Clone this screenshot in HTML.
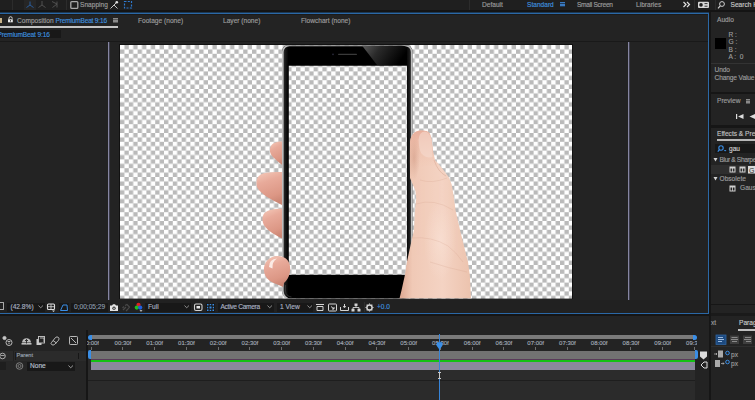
<!DOCTYPE html>
<html><head><meta charset="utf-8">
<style>
*{margin:0;padding:0;box-sizing:border-box}
html,body{width:755px;height:400px;overflow:hidden;background:#232323}
body{position:relative;-webkit-text-stroke:0.15px;font-family:"Liberation Sans",sans-serif;font-size:6.6px;color:#9c9c9c;letter-spacing:0}
.a{position:absolute}
.t{position:absolute;white-space:nowrap;line-height:1}
.b{color:#3f8fdf}
.r{font-size:6px;color:#a0a8b4;transform:translateX(-50%)}
.fld{position:absolute;background:#181818}
svg{position:absolute;overflow:visible}
</style></head><body>
<!-- ========== top bar ========== -->
<div class="a" style="left:0;top:0;width:755px;height:10px;background:#1f1f1f"></div>
<div class="a" style="left:0;top:10px;width:755px;height:2px;background:#141414"></div>
<div class="a" style="left:12px;top:0;width:1px;height:10px;background:#2c2c2c"></div>
<div class="a" style="left:24px;top:0;width:12px;height:10px;background:#262626"></div>
<svg style="left:0;top:0" width="140" height="10">
 <g fill="none" stroke="#2a62a8" stroke-width="0.9"><path d="M30 1.5V5L26.5 7.5M30 5L33.5 7.5"/></g>
 <g fill="none" stroke="#555" stroke-width="0.9"><path d="M42 1V5L38.5 7.5M42 5L45.5 7.5"/><path d="M52 1.5L57 4L52.5 7.5M57 1.5V7.5"/></g>
 <rect x="70.8" y="1.6" width="7" height="6.8" rx="1" fill="none" stroke="#a8a8a8" stroke-width="1.3"/>
 <g fill="none" stroke="#c8c8c8" stroke-width="1"><path d="M110.5 8.5L114 5L117.5 8.5M114 5L116.5 2.5"/></g><circle cx="116.8" cy="2.2" r="1.3" fill="#e0e0e0"/>
 <g fill="none" stroke="#2f7ad0" stroke-width="1.2" stroke-dasharray="2 1.3"><rect x="124.5" y="1.5" width="7" height="6.5"/></g>
</svg>
<div class="a" style="left:66px;top:0;width:1px;height:10px;background:#2c2c2c"></div>
<div class="t" style="left:80px;top:1.5px">Snapping</div>

<div class="a" style="left:469px;top:0;width:1px;height:10px;background:#2c2c2c"></div>
<div class="t" style="left:482px;top:1.5px">Default</div>
<div class="t b" style="left:527px;top:1.5px">Standard</div>
<div class="a" style="left:560px;top:2px;width:4.5px;height:5px;background:repeating-linear-gradient(#3a7ac0 0 1px,#1f3a5a 1px 1.7px)"></div>
<div class="t" style="left:577px;top:1.5px;letter-spacing:-0.3px">Small Screen</div>
<div class="t" style="left:636px;top:1.5px">Libraries</div>
<svg style="left:682px;top:1px" width="10" height="8"><path d="M1.5 1L4 3.5L1.5 6M5 1L7.5 3.5L5 6" fill="none" stroke="#e0e0e0" stroke-width="1.2"/></svg>
<div class="a" style="left:694px;top:0;width:1px;height:10px;background:#2c2c2c"></div>
<svg style="left:697px;top:0" width="13" height="10"><rect x="1" y="1.8" width="11" height="6.2" rx="1" fill="#d8d8d8"/><circle cx="4" cy="4.9" r="1.8" fill="#1f1f1f"/><path d="M7.5 3.6H10.5M7.5 6.2H10.5" stroke="#1f1f1f" stroke-width="0.9"/></svg>
<div class="a" style="left:715px;top:0;width:1px;height:10px;background:#2c2c2c"></div>
<svg style="left:717px;top:0" width="10" height="10"><circle cx="5" cy="4" r="2.4" fill="none" stroke="#cfcfcf" stroke-width="1"/><path d="M3.3 5.8L1 8.4" stroke="#cfcfcf" stroke-width="1.2"/></svg>
<div class="t" style="left:730.5px;top:1.5px;color:#c8c8c8">Search Help</div>

<!-- ========== viewer panel ========== -->
<div class="a" style="left:0;top:12px;width:709px;height:1px;background:#1c3854"></div><div class="a" style="left:0;top:13px;width:709px;height:1px;background:#2b68a6"></div>
<div class="a" style="left:708px;top:13px;width:1px;height:301px;background:#2b68a6"></div>
<div class="a" style="left:0;top:313px;width:709px;height:1px;background:#2b68a6"></div>
<div class="a" style="left:0;top:14px;width:708px;height:1px;background:#1a1a1a"></div>

<!-- tabs -->
<div class="a" style="left:0;top:18px;width:2px;height:5px;background:#c9b48a"></div>
<svg style="left:7px;top:16px" width="7" height="8"><path d="M2 3.3V2.3A1.6 1.6 0 0 1 5.2 2.3V2.8" fill="none" stroke="#e8e8e8" stroke-width="0.9"/><rect x="1" y="3.3" width="4.8" height="3" fill="#e8e8e8"/><rect x="3" y="4.1" width="0.9" height="1.4" fill="#232323"/></svg>
<div class="t" style="left:17px;top:18px">Composition <span class="b" style="letter-spacing:-0.2px">PremiumBeat 9:16</span></div>
<div class="a" style="left:113px;top:18px;width:4.5px;height:5px;background:repeating-linear-gradient(#8a8a8a 0 1px,#5a5a5a 1px 1.6px)"></div>
<div class="a" style="left:0;top:26px;width:118px;height:2px;background:#c4c4c4"></div>
<div class="t" style="left:138px;top:18px">Footage (none)</div>
<div class="t" style="left:223px;top:18px">Layer (none)</div>
<div class="t" style="left:301px;top:18px">Flowchart (none)</div>

<!-- comp name row -->
<div class="fld" style="left:0;top:30px;width:61px;height:8px"></div>
<div class="t b" style="left:-2.5px;top:31.5px;letter-spacing:-0.15px">PremiumBeat 9:16</div>
<div class="a" style="left:0;top:41px;width:708px;height:1px;background:#191919"></div>

<!-- viewer vertical lines -->
<div class="a" style="left:108px;top:42px;width:1px;height:258px;background:#8686a2"></div><div class="a" style="left:109px;top:42px;width:1px;height:258px;background:#3c3c4c"></div>
<div class="a" style="left:628px;top:42px;width:1px;height:258px;background:#8686a2"></div><div class="a" style="left:629px;top:42px;width:1px;height:258px;background:#3c3c4c"></div>

<!-- canvas -->
<div class="a" style="left:119px;top:44px;width:454px;height:255px;background:#111"></div>
<svg style="left:120px;top:45px" width="452" height="254"><defs><pattern id="ck" width="8.8" height="8.8" patternUnits="userSpaceOnUse"><rect width="8.8" height="8.8" fill="#fff"/><rect x="4.4" width="4.4" height="4.4" fill="#bababa"/><rect y="4.4" width="4.4" height="4.4" fill="#bababa"/></pattern></defs><rect width="452" height="253.6" fill="url(#ck)"/></svg>

<!-- phone + hand -->
<svg style="left:0;top:0" width="755" height="400">
 <defs>
  <clipPath id="cv"><rect x="120" y="45.6" width="452" height="253"/></clipPath>
  <linearGradient id="refl" x1="0" y1="0" x2="1" y2="0.3">
   <stop offset="0" stop-color="#5c5c5c"/><stop offset="0.4" stop-color="#2a2a2a"/><stop offset="1" stop-color="#000"/>
  </linearGradient>
  <linearGradient id="rim" gradientUnits="userSpaceOnUse" x1="282" y1="0" x2="412.5" y2="0">
   <stop offset="0" stop-color="#3a3a3a"/><stop offset="0.03" stop-color="#141414"/><stop offset="0.05" stop-color="#000"/><stop offset="0.95" stop-color="#000"/><stop offset="0.975" stop-color="#1a1a1a"/><stop offset="1" stop-color="#3a3a3a"/>
  </linearGradient>
  <linearGradient id="skinR" x1="0" y1="0" x2="1" y2="0">
   <stop offset="0" stop-color="#dba690"/><stop offset="0.18" stop-color="#f0c9b6"/><stop offset="0.6" stop-color="#f4d3c3"/><stop offset="1" stop-color="#ecc3ae"/>
  </linearGradient>
  <linearGradient id="tipR" x1="0" y1="0" x2="0" y2="1">
   <stop offset="0" stop-color="#e8ab98" stop-opacity="0.9"/><stop offset="1" stop-color="#f0c3ae" stop-opacity="0"/>
  </linearGradient>
  <linearGradient id="fing" x1="0.2" y1="0" x2="0.5" y2="1">
   <stop offset="0" stop-color="#f3c6b6"/><stop offset="0.3" stop-color="#e8aa9a"/><stop offset="0.75" stop-color="#dc9785"/><stop offset="1" stop-color="#c98472"/>
  </linearGradient>
 </defs>
 <g clip-path="url(#cv)">
  <!-- left fingers (behind phone) -->
  <path d="M284 141.5C278 141 272 142.5 270.5 147C269 151 270.5 155 274 158C277 161 281 164 284 166.5Z" fill="url(#fing)"/>
  <path d="M284 172C272 172 264 172 260 175C256 178 256 183 257 187C260 194 272 200 284 206Z" fill="url(#fing)"/>
  <path d="M284 208.8C276 208.5 268 209.5 264.5 213C261.5 216.5 262 222 264.5 226C268 231 276 235.5 284 239.5Z" fill="url(#fing)"/>
  <!-- phone body -->
  <path fill-rule="evenodd" d="M289 44.5H405.5A7 7 0 0 1 412.5 51.5V291A9 9 0 0 1 403.5 300H291A9 9 0 0 1 282 291V51.5A7 7 0 0 1 289 44.5ZM288.8 65.8V274.8H407V65.8Z" fill="url(#rim)"/>
  <path d="M289.5 45.3H405A6.7 6.7 0 0 1 411.7 52V291A8.3 8.3 0 0 1 403.4 299.3H291.1A8.3 8.3 0 0 1 282.8 291V52A6.7 6.7 0 0 1 289.5 45.3Z" fill="none" stroke="#bcbcbc" stroke-width="1.7"/>
  <path d="M285.5 285V291A6 6 0 0 0 291.5 297" fill="none" stroke="#3a3a3a" stroke-width="0.8"/>
  
  <path d="M362 45.5L377 65H407V51.5Q407 45.5 402 45.5Z" fill="url(#refl)"/>
  <circle cx="333" cy="54.3" r="0.9" fill="#2a2a3a"/>
  <rect x="338" y="53.7" width="19" height="1.2" rx="0.6" fill="#3a3a3a"/>
  <!-- pinky -->
  <path d="M283 287C278 284 269 283 265.5 276C262 269 264.5 260 272 257C280 254 289 257.5 290 266C291 274 287.5 280 284 283Z" fill="url(#fing)"/>
  <path d="M269 267Q269 259 277 258.5Q272 261.5 272.5 268.5Z" fill="#fbeae4"/>
  <!-- right thumb / hand -->
  <path d="M410 142C410.5 136 414 130.5 421 130.5C426 130.5 429 131.5 430 134L431.5 139L433 151L435 160L439.4 165L443.8 170.5L449 177.5L451.7 184.5L453.5 195L455.5 210L460 230L465 250L468 262L469.8 275L471 298.5H399.5L401.6 290L404.9 275L406.9 262L409.5 250L414 230L415 210L416.2 199L415.5 191L413 185L410 178Z" fill="url(#skinR)"/>
  <path d="M410 142C410.5 136 414 130.5 421 130.5C426 130.5 429 131.5 430 134L431.5 139L433 151L435 160L439.4 165L410 168Z" fill="url(#tipR)"/>
  <defs><radialGradient id="knk" cx="0.5" cy="0.5" r="0.5"><stop offset="0" stop-color="#c98f78" stop-opacity="0.45"/><stop offset="1" stop-color="#c98f78" stop-opacity="0"/></radialGradient>
  <radialGradient id="hil" cx="0.5" cy="0.5" r="0.5"><stop offset="0" stop-color="#fae3d8" stop-opacity="0.6"/><stop offset="1" stop-color="#fae3d8" stop-opacity="0"/></radialGradient></defs>
  <ellipse cx="414" cy="158" rx="6" ry="22" fill="url(#knk)"/>
  <ellipse cx="440" cy="240" rx="16" ry="40" fill="url(#hil)"/>
  <path d="M434 160Q438 172 446 176" fill="none" stroke="#d09a84" stroke-width="0.8" opacity="0.5"/>
  <path d="M418.5 140Q419 131.5 425 131.5Q430 132 431.5 140L432.5 157Q426 159 421 153Q419 149 418.5 140Z" fill="#f5dcd2" opacity="0.55"/>
  <g fill="none" stroke="#cf9a84" stroke-width="0.7" opacity="0.3"><path d="M416 204Q434 198 453 210"/><path d="M411 238Q432 236 448 246Q456 252 463 262"/><path d="M420 180Q432 184 447 178"/><path d="M430 262Q448 268 467 272"/></g>
 </g>
</svg>

<!-- ========== viewer toolbar ========== -->
<div class="a" style="left:0;top:300px;width:708px;height:13px;background:#212121"></div>
<div class="a" style="left:0;top:302px;width:4px;height:8px;border:1px solid #aaa;border-left:none;border-radius:0 1px 1px 0"></div>
<div class="fld" style="left:7px;top:302.5px;width:38px;height:9.5px"></div>
<div class="t" style="left:10.5px;top:304px;color:#a8b0c0">(42.8%)</div>
<svg style="left:38px;top:305px" width="6" height="4"><path d="M0.5 0.5L2.7 2.8L5 0.5" fill="none" stroke="#999" stroke-width="0.9"/></svg>
<svg style="left:46px;top:303px" width="10" height="9"><rect x="1.5" y="1" width="7" height="5.5" rx="1" fill="none" stroke="#ddd" stroke-width="1.1"/><path d="M1.5 3.7H8.5M5 1V6.5" stroke="#ddd" stroke-width="0.8"/><path d="M6 7.5H9L7.5 9Z" fill="#ddd"/></svg>
<div class="fld" style="left:58.5px;top:302.5px;width:10px;height:9.5px"></div>
<svg style="left:59px;top:303px" width="10" height="9"><path d="M1.5 7.5L4 2H8L8.5 7.5Z" fill="none" stroke="#3a8ee6" stroke-width="1"/></svg>
<div class="fld" style="left:70.5px;top:302.5px;width:37px;height:9.5px"></div>
<div class="t" style="left:74px;top:304px;color:#8a98a8">0;00;05;29</div>
<svg style="left:109px;top:303px" width="10" height="9"><path d="M1 2.5H3L4 1.2H6L7 2.5H9V8H1Z" fill="#e4e4e4"/><circle cx="5" cy="5.2" r="1.6" fill="#1f1f1f"/><circle cx="5" cy="5.2" r="0.8" fill="#e4e4e4"/></svg>
<svg style="left:121px;top:303px" width="10" height="9"><path d="M2 7L5 4M4 2.5L6 1.5L8.5 4L7 6M1.5 5L3 3.5M5 8L7 6" fill="none" stroke="#484848" stroke-width="1.2"/></svg>
<svg style="left:134px;top:302px" width="9" height="11"><circle cx="4.5" cy="2.8" r="2.1" fill="#e02020"/><circle cx="2.8" cy="5.6" r="2.1" fill="#20c020"/><circle cx="6.2" cy="5.6" r="2.1" fill="#2060e0"/><path d="M5.5 8.3H8.5L7 9.8Z" fill="#ddd"/></svg>
<div class="fld" style="left:145px;top:302.5px;width:46px;height:9.5px"></div>
<div class="t" style="left:148px;top:304px;color:#a8b0c0">Full</div>
<svg style="left:184px;top:305px" width="6" height="4"><path d="M0.5 0.5L2.7 2.8L5 0.5" fill="none" stroke="#999" stroke-width="0.9"/></svg>
<svg style="left:193px;top:303px" width="10" height="9"><rect x="1.5" y="1" width="7.5" height="6.5" rx="1.5" fill="none" stroke="#d0d0d0" stroke-width="1.1"/><rect x="3.5" y="3" width="3.5" height="2.5" fill="#e8e8e8"/></svg>
<div class="fld" style="left:205.5px;top:302.5px;width:9.5px;height:9.5px"></div>
<svg style="left:206px;top:303px" width="9" height="9"><g fill="#3a8ee6"><rect x="1" y="1" width="1.5" height="1.5"/><rect x="6.5" y="1" width="1.5" height="1.5"/><rect x="1" y="6.5" width="1.5" height="1.5"/><rect x="6.5" y="6.5" width="1.5" height="1.5"/><rect x="3.7" y="1" width="1.5" height="1.2"/><rect x="3.7" y="6.8" width="1.5" height="1.2"/><rect x="1" y="3.8" width="1.2" height="1.5"/><rect x="6.8" y="3.8" width="1.2" height="1.5"/><rect x="3.5" y="3.5" width="2" height="2"/></g></svg>
<div class="fld" style="left:217.5px;top:302.5px;width:56px;height:9.5px"></div>
<div class="t" style="left:220.5px;top:304px;color:#a8b0c0;letter-spacing:-0.3px">Active Camera</div>
<svg style="left:267px;top:305px" width="6" height="4"><path d="M0.5 0.5L2.7 2.8L5 0.5" fill="none" stroke="#999" stroke-width="0.9"/></svg>
<div class="fld" style="left:277px;top:302.5px;width:36px;height:9.5px"></div>
<div class="t" style="left:280px;top:304px;color:#a8b0c0">1 View</div>
<svg style="left:307px;top:305px" width="6" height="4"><path d="M0.5 0.5L2.7 2.8L5 0.5" fill="none" stroke="#999" stroke-width="0.9"/></svg>
<svg style="left:315px;top:303px" width="80" height="9" fill="none" stroke="#d4d4d4" stroke-width="1">
 <path d="M1 1.5H9M2 3.5H8V7.5H2Z"/>
 <rect x="13.5" y="1" width="8" height="7" rx="0.8"/><path d="M16 3.5L19 6M19 4V6H17" />
 <path d="M25.5 4V7.5H33.5V4M29.5 1V4.5M28 3.3L29.5 4.5L31 3.3"/>
 <path d="M41 2.5V4.5M38 6.5V4.5H44V6.5" stroke-width="0.9"/><rect x="39.5" y="0.5" width="3" height="2.5" fill="#d4d4d4" stroke="none"/><rect x="36.5" y="5.8" width="3" height="2.7" fill="#d4d4d4" stroke="none"/><rect x="42.5" y="5.8" width="3" height="2.7" fill="#d4d4d4" stroke="none"/>
 <circle cx="54.5" cy="4.5" r="2.6" stroke-width="1.5"/><path d="M54.5 0.5V1.5M54.5 7.5V8.5M50.5 4.5H51.5M57.5 4.5H58.5M51.7 1.7L52.4 2.4M56.6 6.6L57.3 7.3M51.7 7.3L52.4 6.6M56.6 2.4L57.3 1.7" stroke-width="1.1"/>
</svg>
<div class="a" style="left:363.5px;top:302px;width:1px;height:10px;background:#2e2e2e"></div>
<div class="t b" style="left:377px;top:304px">+0.0</div>

<!-- ========== right panel ========== -->
<div class="a" style="left:709px;top:12px;width:2px;height:388px;background:#161616"></div>
<div class="t" style="left:717px;top:17.3px">Audio</div>
<div class="a" style="left:715px;top:38px;width:11px;height:10.5px;background:#000"></div>
<div class="t" style="left:728.5px;top:30.8px;line-height:7.45px">R :<br>G :<br>B :<br>A : &nbsp;0</div>
<div class="a" style="left:711px;top:63px;width:44px;height:1px;background:#333"></div>
<div class="t" style="left:714.5px;top:66px;line-height:7.8px;letter-spacing:-0.12px">Undo<br>Change Value</div>
<div class="a" style="left:711px;top:91.5px;width:44px;height:2px;background:#161616"></div>
<div class="t" style="left:717px;top:97.5px">Preview</div>
<div class="a" style="left:745.5px;top:99px;width:4.5px;height:5px;background:repeating-linear-gradient(#8a8a8a 0 1px,#5a5a5a 1px 1.6px)"></div>
<svg style="left:735px;top:113px" width="20" height="7"><rect x="1" y="1" width="1.2" height="5" fill="#ddd"/><path d="M8.5 1V6L3 3.5Z" fill="#ddd"/><path d="M20 1V6L14.5 3.5Z" fill="#ddd"/></svg>
<div class="a" style="left:711px;top:125px;width:44px;height:3px;background:#161616"></div>
<div class="t" style="left:717px;top:131px;color:#c0c0c0">Effects &amp; Presets</div>
<div class="a" style="left:717px;top:138.5px;width:38px;height:2px;background:#b8b8b8"></div>
<div class="fld" style="left:715px;top:144px;width:40px;height:9px"></div>
<svg style="left:717px;top:145px" width="11" height="8"><circle cx="4" cy="3" r="2.2" fill="none" stroke="#3a8ee6" stroke-width="1.1"/><path d="M2.5 4.6L0.8 6.6" stroke="#3a8ee6" stroke-width="1.2"/><path d="M6.8 5H9.5L8.1 6.5Z" fill="#3a8ee6"/></svg>
<div class="t" style="left:729px;top:146px;color:#d0d0d0">gau</div>
<svg style="left:713px;top:157px" width="5" height="25"><path d="M0.5 1H4.5L2.5 4.5Z" fill="#d0d0d0"/><path d="M0.5 20H4.5L2.5 23.5Z" fill="#d0d0d0"/></svg>
<div class="t" style="left:719.5px;top:156.5px;letter-spacing:-0.35px">Blur &amp; Sharpen</div>
<div class="a" style="left:711px;top:165px;width:44px;height:9px;background:#2e2e2e"></div>
<svg style="left:729px;top:166px" width="26" height="8"><g fill="#d0d0d0"><rect x="0.5" y="0.5" width="6" height="6"/><rect x="10.5" y="0.5" width="6" height="6"/></g><g fill="#2e2e2e"><rect x="1.5" y="2.5" width="1.6" height="3"/><rect x="3.9" y="2.5" width="1.6" height="3"/><rect x="11.5" y="2.5" width="1.6" height="3"/><rect x="13.9" y="2.5" width="1.6" height="3"/></g><rect x="19" y="0" width="7" height="7.5" fill="#d8d8d8"/><text x="20" y="6.5" font-size="7" font-family="Liberation Sans" fill="#333">G</text></svg>
<div class="t" style="left:719.5px;top:176px">Obsolete</div>
<svg style="left:729px;top:184.5px" width="8" height="8"><rect x="0.5" y="0.5" width="6" height="6" fill="#d0d0d0"/><g fill="#232323"><rect x="1.5" y="2.5" width="1.6" height="3"/><rect x="3.9" y="2.5" width="1.6" height="3"/></g></svg>
<div class="t" style="left:740px;top:184.5px">Gaussian</div>

<div class="a" style="left:711px;top:304px;width:44px;height:1px;background:#161616"></div><div class="a" style="left:711px;top:313px;width:44px;height:3px;background:#1a1a1a"></div>
<div class="t" style="left:711px;top:320px">xt</div>
<div class="t" style="left:739px;top:320px;color:#c8c8c8">Paragraph</div>
<div class="a" style="left:738px;top:329px;width:17px;height:1.5px;background:#c0c0c0"></div>
<svg style="left:715px;top:334px" width="40" height="11"><rect x="1" y="1" width="10" height="9.5" fill="#1d4a80" stroke="#2f64a0" stroke-width="0.8"/><g fill="#9ab8dc"><rect x="3" y="3" width="5" height="1"/><rect x="3" y="5" width="6" height="1"/><rect x="3" y="7" width="4" height="1"/></g>
<rect x="15" y="1.5" width="9" height="8.5" fill="#3e3e3e"/><g fill="#8a8a8a"><rect x="16.5" y="3" width="6" height="1"/><rect x="16" y="5" width="7" height="1"/><rect x="17" y="7" width="5" height="1"/></g>
<rect x="28" y="1.5" width="9" height="8.5" fill="#3e3e3e"/><g fill="#8a8a8a"><rect x="30" y="3" width="6" height="1"/><rect x="29" y="5" width="7" height="1"/><rect x="31" y="7" width="5" height="1"/></g></svg>
<div class="a" style="left:711px;top:346px;width:44px;height:1px;background:#2e2e2e"></div>
<svg style="left:714px;top:350px" width="41" height="20"><g fill="#aaa"><rect x="4" y="0.5" width="5" height="7"/><path d="M0 4H3M2 3L3 4L2 5" stroke="#aaa" stroke-width="0.8"/><rect x="1" y="10" width="5" height="7"/><path d="M7 13.5H10M9 12.5L10 13.5L9 14.5" stroke="#aaa" stroke-width="0.8"/></g><circle cx="13.5" cy="3" r="1.8" fill="none" stroke="#3a8ee6" stroke-width="1"/><circle cx="13.5" cy="12" r="1.8" fill="none" stroke="#3a8ee6" stroke-width="1"/></svg>
<div class="t" style="left:731px;top:352px">px</div>
<div class="t" style="left:731px;top:361px">px</div>

<!-- ========== timeline ========== -->
<div class="a" style="left:0;top:314px;width:709px;height:2px;background:#151515"></div>
<svg style="left:0;top:335px" width="82" height="12" fill="none" stroke="#c8c8c8" stroke-width="0.9">
 <circle cx="9" cy="7.5" r="3"/><path d="M7.6 6.5H10.4M9 9V7.5"/><circle cx="4.5" cy="3" r="1.6" fill="#c8c8c8"/>
 <path d="M22 7.5A4.5 4.3 0 0 1 31 7.5Z" fill="#bdbdbd" stroke="none"/><rect x="21.5" y="8" width="10" height="1.6" fill="#bdbdbd" stroke="none"/><path d="M26.5 4.5V8.5M25 6L26.5 4.5L28 6" stroke="#232323" stroke-width="0.9"/>
 <rect x="36.5" y="4" width="5" height="6" fill="#c8c8c8" stroke="none"/><rect x="38.5" y="1.5" width="6" height="6.5" fill="#232323"/><path d="M40 3H44V7"/>
 <path d="M51.5 7.5L55.5 2.5Q57 1.2 58.5 2.5Q59.7 3.8 58.5 5.3L54.5 9.5Q53 10.7 51.6 9.5Q50.4 8.3 51.5 7.5ZM53 5.5L56.5 8"/>
 <rect x="69.5" y="1.5" width="8" height="8" rx="0.8"/><path d="M71 3L76 8"/>
</svg>
<!-- header row -->
<div class="a" style="left:0;top:351px;width:86px;height:10px;background:#2b2b2b"></div>
<svg style="left:0;top:352px" width="7" height="8"><circle cx="2.5" cy="4" r="2.8" fill="none" stroke="#bbb" stroke-width="0.9"/><path d="M0.5 3.5H4.5" stroke="#bbb" stroke-width="0.8"/></svg>
<div class="a" style="left:12.5px;top:351px;width:1px;height:10px;background:#202020"></div>
<div class="a" style="left:15px;top:352px;width:1px;height:8px;background:#1a1a1a"></div>
<div class="t" style="left:16.5px;top:353px;font-size:5.6px;color:#9aa3b0">Parent</div>
<div class="a" style="left:78px;top:352.5px;width:1px;height:6px;background:#161616"></div>
<!-- row 2 -->
<div class="a" style="left:0;top:361px;width:86px;height:10px;background:#262626"></div>
<div class="a" style="left:0;top:362px;width:6px;height:8px;background:#1e1e1e"></div>
<svg style="left:15px;top:362px" width="9" height="8"><circle cx="4.5" cy="4" r="3.3" fill="none" stroke="#888" stroke-width="0.9"/><circle cx="4.5" cy="4" r="1.5" fill="none" stroke="#888" stroke-width="0.8"/></svg>
<div class="fld" style="left:27px;top:362px;width:48px;height:8.5px"></div>
<div class="t" style="left:30px;top:363px;color:#b8c0cc">None</div>
<svg style="left:68px;top:364.5px" width="6" height="4"><path d="M0.5 0.5L2.7 2.8L5 0.5" fill="none" stroke="#aaa" stroke-width="0.9"/></svg>

<div class="a" style="left:86px;top:330px;width:2px;height:70px;background:#161616"></div><div class="a" style="left:88px;top:350px;width:3px;height:50px;background:#2a2a2a"></div>
<!-- work area bar -->
<div class="a" style="left:91px;top:335px;width:603px;height:4px;background:#7a7a7a"></div>
<div class="a" style="left:87.5px;top:334.5px;width:4px;height:5px;background:#3a8ee6;border-radius:3px 0 0 3px"></div>
<div class="a" style="left:693px;top:334.5px;width:4px;height:5px;background:#3a8ee6;border-radius:0 3px 3px 0"></div>
<!-- ruler -->
<div style="position:absolute;left:0;top:0;width:697px;height:400px;overflow:hidden"><div class="a" style="left:90.70px;top:347px;width:1px;height:2.5px;background:#6e6e6e"></div>
<div class="t" style="left:87px;top:340px;font-size:6px;color:#a0a8b4;width:12px;overflow:hidden;direction:rtl">00:00f</div>
<div class="a" style="left:122.45px;top:347px;width:1px;height:2.5px;background:#6e6e6e"></div>
<div class="t r" style="left:122.95px;top:340px">00:30f</div>
<div class="a" style="left:154.20px;top:347px;width:1px;height:2.5px;background:#6e6e6e"></div>
<div class="t r" style="left:154.70px;top:340px">01:00f</div>
<div class="a" style="left:185.95px;top:347px;width:1px;height:2.5px;background:#6e6e6e"></div>
<div class="t r" style="left:186.45px;top:340px">01:30f</div>
<div class="a" style="left:217.70px;top:347px;width:1px;height:2.5px;background:#6e6e6e"></div>
<div class="t r" style="left:218.20px;top:340px">02:00f</div>
<div class="a" style="left:249.45px;top:347px;width:1px;height:2.5px;background:#6e6e6e"></div>
<div class="t r" style="left:249.95px;top:340px">02:30f</div>
<div class="a" style="left:281.20px;top:347px;width:1px;height:2.5px;background:#6e6e6e"></div>
<div class="t r" style="left:281.70px;top:340px">03:00f</div>
<div class="a" style="left:312.95px;top:347px;width:1px;height:2.5px;background:#6e6e6e"></div>
<div class="t r" style="left:313.45px;top:340px">03:30f</div>
<div class="a" style="left:344.70px;top:347px;width:1px;height:2.5px;background:#6e6e6e"></div>
<div class="t r" style="left:345.20px;top:340px">04:00f</div>
<div class="a" style="left:376.45px;top:347px;width:1px;height:2.5px;background:#6e6e6e"></div>
<div class="t r" style="left:376.95px;top:340px">04:30f</div>
<div class="a" style="left:408.20px;top:347px;width:1px;height:2.5px;background:#6e6e6e"></div>
<div class="t r" style="left:408.70px;top:340px">05:00f</div>
<div class="a" style="left:439.95px;top:347px;width:1px;height:2.5px;background:#6e6e6e"></div>
<div class="t r" style="left:440.45px;top:340px">05:30f</div>
<div class="a" style="left:471.70px;top:347px;width:1px;height:2.5px;background:#6e6e6e"></div>
<div class="t r" style="left:472.20px;top:340px">06:00f</div>
<div class="a" style="left:503.45px;top:347px;width:1px;height:2.5px;background:#6e6e6e"></div>
<div class="t r" style="left:503.95px;top:340px">06:30f</div>
<div class="a" style="left:535.20px;top:347px;width:1px;height:2.5px;background:#6e6e6e"></div>
<div class="t r" style="left:535.70px;top:340px">07:00f</div>
<div class="a" style="left:566.95px;top:347px;width:1px;height:2.5px;background:#6e6e6e"></div>
<div class="t r" style="left:567.45px;top:340px">07:30f</div>
<div class="a" style="left:598.70px;top:347px;width:1px;height:2.5px;background:#6e6e6e"></div>
<div class="t r" style="left:599.20px;top:340px">08:00f</div>
<div class="a" style="left:630.45px;top:347px;width:1px;height:2.5px;background:#6e6e6e"></div>
<div class="t r" style="left:630.95px;top:340px">08:30f</div>
<div class="a" style="left:662.20px;top:347px;width:1px;height:2.5px;background:#6e6e6e"></div>
<div class="t r" style="left:662.70px;top:340px">09:00f</div>
<div class="a" style="left:693.95px;top:347px;width:1px;height:2.5px;background:#6e6e6e"></div>
<div class="t r" style="left:694.45px;top:340px">09:30f</div></div>
<!-- layer bars -->
<div class="a" style="left:91px;top:350.5px;width:604px;height:8px;background:#727272"></div>
<div class="a" style="left:91px;top:358.5px;width:604px;height:1px;background:#5a3a5a"></div>
<div class="a" style="left:91px;top:359.5px;width:604px;height:2px;background:#14c014"></div>
<div class="a" style="left:91px;top:361.5px;width:604px;height:8.8px;background:#8a889c"></div>
<div class="a" style="left:87.5px;top:350px;width:3px;height:9px;background:#3a8ee6;border-radius:2px 0 0 2px"></div>
<div class="a" style="left:694.5px;top:350px;width:3px;height:9px;background:#3a8ee6;border-radius:0 2px 2px 0"></div>
<div class="a" style="left:88px;top:370.3px;width:607px;height:9.7px;background:#2c2c2c"></div>
<div class="a" style="left:88px;top:380px;width:607px;height:1px;background:#1e1e1e"></div>
<div class="a" style="left:88px;top:381px;width:607px;height:19px;background:#2b2b2b"></div><div class="a" style="left:0;top:371px;width:86px;height:29px;background:#262626"></div>
<!-- right-side icons -->
<svg style="left:699px;top:351px" width="10" height="20"><path d="M1 0.5H8V5.5L4.5 8.5L1 5.5Z" fill="#ddd"/><path d="M2 14L5 11H8V17H5Z" fill="none" stroke="#ddd" stroke-width="1"/></svg>
<!-- playhead -->
<div class="a" style="left:439px;top:334px;width:1px;height:66px;background:#3784d8"></div>
<svg style="left:436px;top:341.5px" width="7" height="9"><path d="M0.5 2Q0.5 0 2 0Q3 0 3.5 1Q4 0 5 0Q6.5 0 6.5 2V3.5L3.5 7.8L0.5 3.5Z" fill="#3a8ee6"/></svg>
<svg style="left:437px;top:372px" width="5" height="8"><path d="M1 0.5H4M1 6.5H4M2.5 0.5V6.5" stroke="#c8c8c8" stroke-width="1"/></svg>
</body></html>
